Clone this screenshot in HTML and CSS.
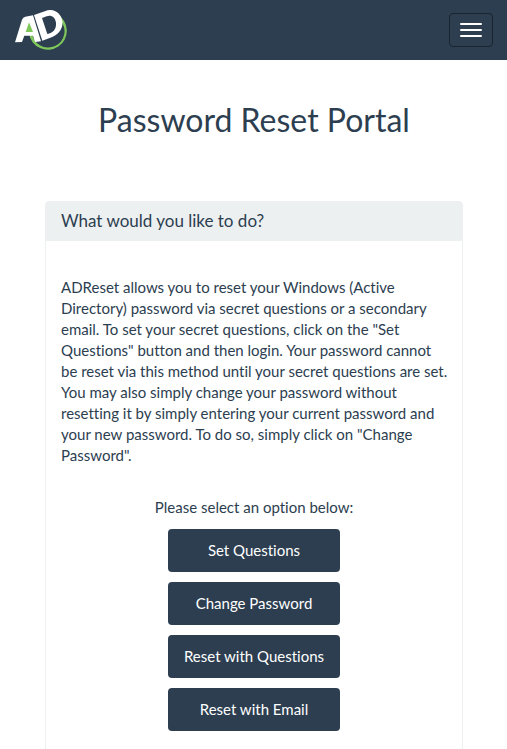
FILE: index.html
```html
<!DOCTYPE html>
<html lang="en">
<head>
<meta charset="utf-8">
<meta name="viewport" content="width=device-width, initial-scale=1">
<title>Password Reset Portal</title>
<link rel="stylesheet" href="styles.css">
</head>
<body>
<header class="navbar">
  <a class="brand" href="#" aria-label="ADReset">
    <svg width="54" height="42" viewBox="42 27 162 126" aria-hidden="true">
      <path fill="#7fc75b" d="M172 43A57 57 0 1 1 87 100L96 100A49 49 0 1 0 181 61Z"/>
      <path fill="#7fc75b" d="M84 60 72 100H102V60z"/>
      <path fill="#fff" fill-rule="evenodd" d="M45 127 66 59Q69 51 76 50L99 46 123 124 105 126 99 107H73L66 126zM87 67 77 96H99z"/>
      <path fill="#fff" fill-rule="evenodd" d="M102 45 143 31C165 25 184 42 187 63C190 88 173 106 151 113L127 122zM126 54 142 102C160 98 169 87 168 69C166 51 153 44 140 49z"/>
    </svg>
  </a>
  <button class="toggle" type="button" aria-label="Toggle navigation"><span class="bar"></span><span class="bar"></span><span class="bar"></span></button>
</header>
<main class="container">
  <h1 class="title">Password Reset Portal</h1>
  <section class="panel">
    <h2 class="panel-heading">What would you like to do?</h2>
    <div class="panel-body">
      <p class="intro">ADReset allows you to reset your Windows (Active Directory) password via secret questions or a secondary email. To set your secret questions, click on the "Set Questions" button and then login. Your password cannot be reset via this method until your secret questions are set. You may also simply change your password without resetting it by simply entering your current password and your new password. To do so, simply click on "Change Password".</p>
      <p class="prompt">Please select an option below:</p>
      <div class="options">
        <button class="btn" type="button">Set Questions</button>
        <button class="btn" type="button">Change Password</button>
        <button class="btn" type="button">Reset with Questions</button>
        <button class="btn" type="button">Reset with Email</button>
      </div>
    </div>
  </section>
</main>
</body>
</html>
```
FILE: styles.css
```css
* { box-sizing: border-box; }
html { overflow-x: hidden; scrollbar-width: none; }
body {
  margin: 0;
  font: 15px/21px Lato, "Liberation Sans", sans-serif;
  font-variant-ligatures: none;
  color: #2c3e50;
  background: #fff;
}
.navbar {
  display: flex;
  align-items: center;
  justify-content: space-between;
  height: 60px;
  padding: 0 14px;
  background: #2c3e50;
}
.brand, .brand svg { display: block; }
.toggle {
  display: flex;
  flex-direction: column;
  gap: 4px;
  padding: 9px 10px;
  border: 1px solid #1a242f;
  border-radius: 4px;
  background: transparent;
}
.bar { width: 22px; height: 2px; border-radius: 1px; background: #fff; }
.container { padding: 0 44px 0 45px; }
.title {
  margin: 40px 0 62px;
  font-size: 32px;
  line-height: 39px;
  font-weight: 400;
  text-align: center;
}
.panel { border: 1px solid #ecf0f1; border-radius: 4px; }
.panel-heading {
  margin: 0;
  padding: 9px 15px 11px;
  font-size: 17px;
  line-height: 19px;
  font-weight: 400;
  background: #ecf0f1;
}
.panel-body { padding: 36px 12px 36px 15px; }
.intro { margin: 0 0 31px; }
.prompt { margin: 0 3px 11px 0; text-align: center; }
.options { display: grid; gap: 10px; width: 175px; padding-right: 3px; margin: 0 auto; }
.btn {
  padding: 11px 15px;
  border: 0;
  border-radius: 4px;
  font: inherit;
  font-variant-ligatures: none;
  color: #fff;
  background: #2c3e50;
  white-space: nowrap;
}
```
